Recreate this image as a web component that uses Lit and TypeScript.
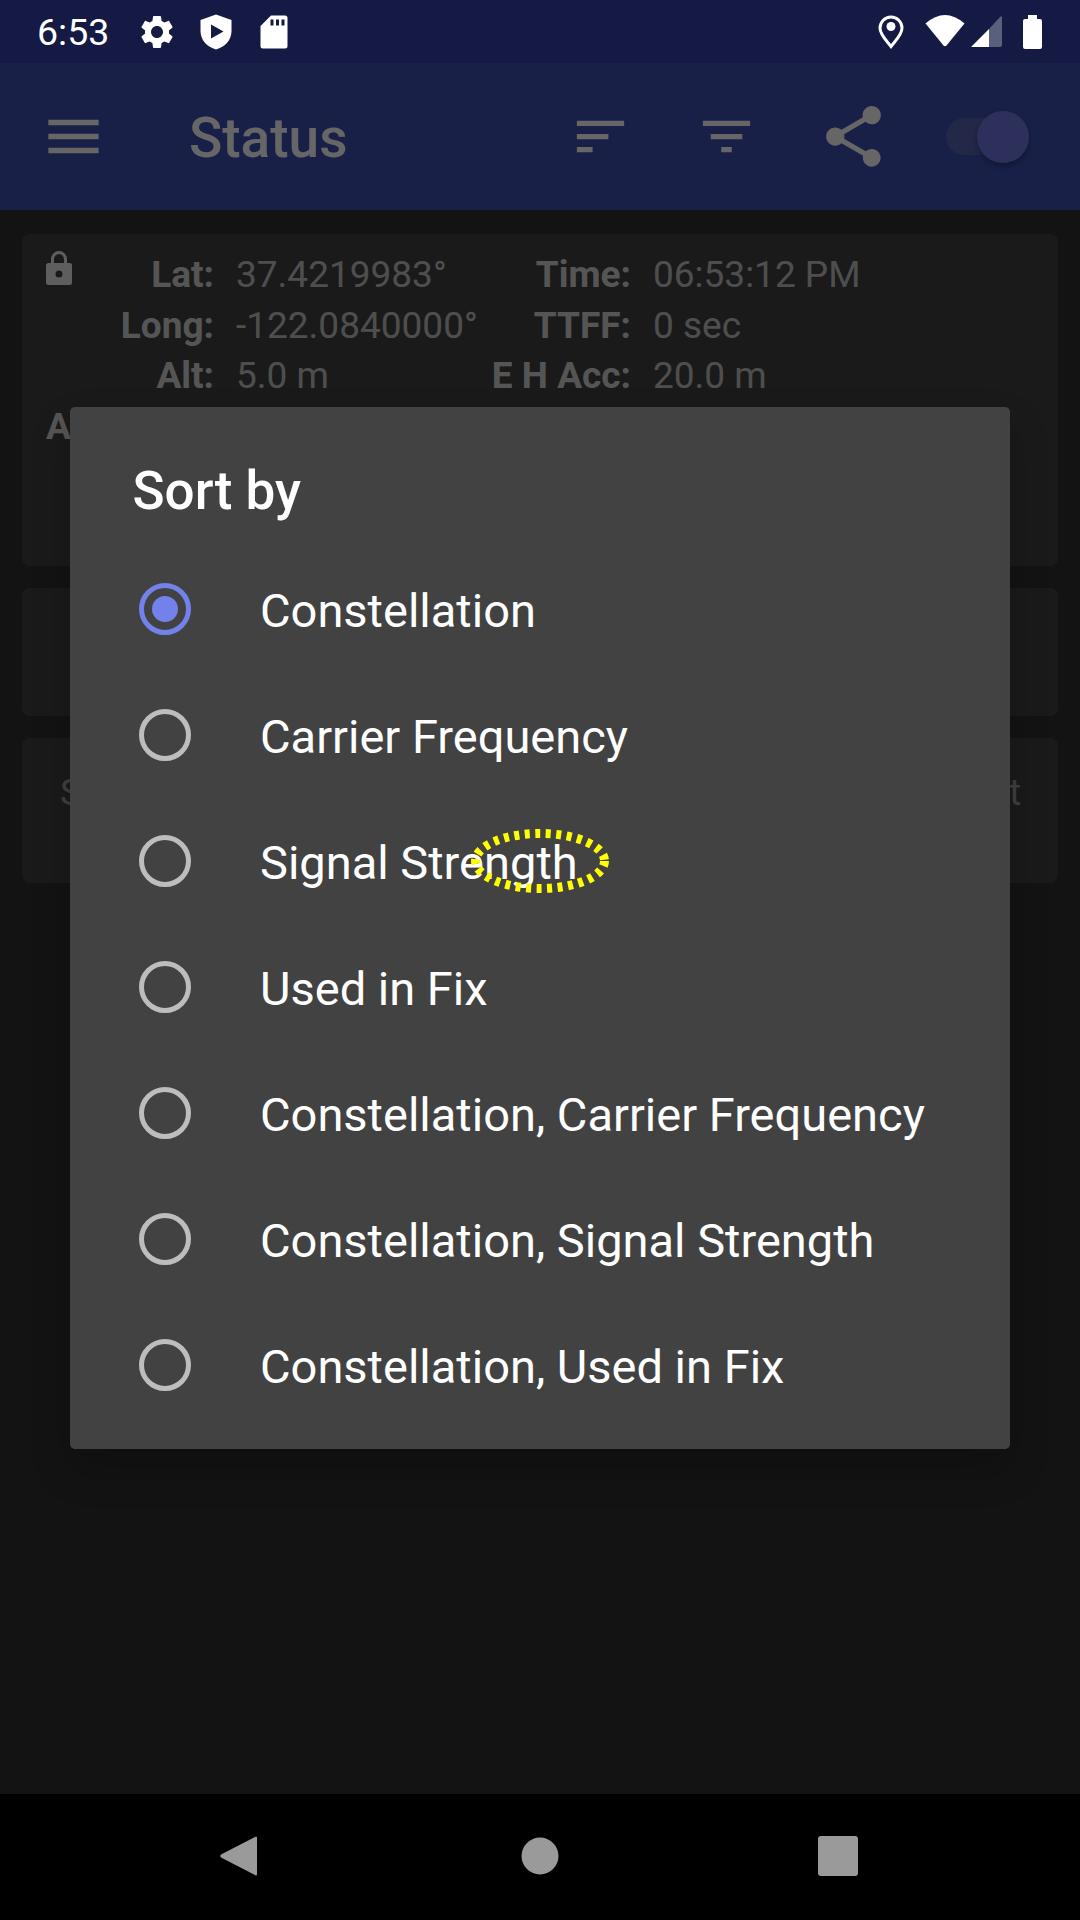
import {html, css, LitElement} from 'lit';
import {customElement} from 'lit/decorators.js';

const rows = [
  ['Lat:', '37.4219983°', 'Time:', '06:53:12 PM'],
  ['Long:', '-122.0840000°', 'TTFF:', '0 sec'],
  ['Alt:', '5.0 m', 'E H Acc:', '20.0 m'],
  ['Alt (MSL):', '', '', ''],
];

const options = [
  'Constellation',
  'Carrier Frequency',
  'Signal Strength',
  'Used in Fix',
  'Constellation, Carrier Frequency',
  'Constellation, Signal Strength',
  'Constellation, Used in Fix',
];

@customElement('app-root')
export class AppRoot extends LitElement {
  static styles = css`
    :host {
      display: block;
      position: relative;
      width: 1080px;
      height: 1920px;
      overflow: hidden;
      font-family: Roboto, 'Noto Sans', sans-serif;
      background: #303030;
    }
    svg {
      display: block;
      flex: none;
    }
    .page {
      display: flex;
      flex-direction: column;
      height: 1920px;
    }

    .status {
      display: flex;
      align-items: center;
      height: 63px;
      flex: none;
      padding: 0 38px;
      box-sizing: border-box;
      background: #141a43;
      color: #fff;
      fill: #fff;
    }
    .clock {
      width: 70px;
      margin-left: -1px;
      margin-right: 30px;
      font-size: 37.5px;
      white-space: nowrap;
    }
    .shield {
      margin-left: 18.5px;
    }
    .sd {
      margin-left: 18px;
    }
    .tray {
      display: flex;
      align-items: center;
      margin-left: auto;
    }
    .wifi {
      margin-left: 14px;
    }
    .signal {
      margin-left: 6px;
    }
    .battery {
      margin-left: 21px;
    }

    .screen {
      position: relative;
      flex: 1;
      display: flex;
      flex-direction: column;
    }
    .appbar {
      display: flex;
      align-items: center;
      height: 147px;
      flex: none;
      padding-left: 40px;
      box-sizing: border-box;
      background: #3f51b5;
      color: #fff;
      fill: #fff;
    }
    .title {
      margin-left: 82px;
      padding-top: 2px;
      font-size: 55px;
      font-weight: 500;
    }
    .sort {
      margin-left: auto;
    }
    .filter {
      margin-left: 63px;
    }
    .share {
      margin-left: 59px;
      margin-right: 56px;
    }
    .switch {
      position: relative;
      width: 83px;
      height: 52px;
      margin-right: 51px;
    }
    .track {
      width: 74px;
      height: 37px;
      margin-top: 7px;
      border-radius: 19px;
      background: #5964b4;
    }
    .thumb {
      position: absolute;
      top: 0;
      right: 0;
      width: 52px;
      height: 52px;
      border-radius: 50%;
      background: #7378e6;
      box-shadow: 0 3px 6px rgba(0, 0, 0, 0.35);
    }

    .cards {
      display: flex;
      flex-direction: column;
      gap: 22.5px;
      padding: 24px 22px 0;
    }
    .card {
      position: relative;
      background: #424242;
      border-radius: 8px;
      box-sizing: border-box;
    }
    .fix {
      height: 331.5px;
      padding: 16px 0 0 24px;
      color: rgba(255, 255, 255, 0.7);
    }
    .lock {
      position: absolute;
      top: 17px;
      left: 24px;
      fill: #fff;
      opacity: 0.9;
    }
    .grid {
      display: grid;
      grid-template-columns: 168px 233px 140px 1fr;
      column-gap: 22px;
      font-size: 37px;
      line-height: 50.5px;
    }
    .label {
      color: rgba(255, 255, 255, 0.8);
      font-weight: 700;
      text-align: right;
      white-space: nowrap;
    }
    .value {
      white-space: nowrap;
    }
    .filters {
      height: 127.5px;
    }
    .notice {
      display: flex;
      justify-content: space-between;
      height: 145px;
      padding: 30px 37px 0 38px;
      color: rgba(255, 255, 255, 0.5);
      font-size: 37px;
      line-height: 50.5px;
    }

    .scrim {
      position: absolute;
      inset: 0;
      background: rgba(0, 0, 0, 0.6);
    }
    .dialog {
      position: absolute;
      top: 344px;
      left: 70px;
      width: 940px;
      height: 1042px;
      box-sizing: border-box;
      padding-top: 57px;
      background: #424242;
      border-radius: 5px;
      color: #fff;
      box-shadow: 0 20px 40px rgba(0, 0, 0, 0.2);
    }
    .dialog h2 {
      margin: 0 0 27px 62.5px;
      font-size: 53px;
      font-weight: 500;
      line-height: 55px;
    }
    .option {
      display: flex;
      align-items: center;
      height: 126px;
      padding-left: 69px;
      font-size: 47px;
      white-space: nowrap;
    }
    .option-text {
      padding-top: 2px;
    }
    .radio {
      display: flex;
      align-items: center;
      justify-content: center;
      width: 52px;
      height: 52px;
      flex: none;
      margin-right: 69px;
      box-sizing: border-box;
      border: 5px solid #bdbdbd;
      border-radius: 50%;
    }
    .radio.on {
      border-color: #7381ea;
    }
    .radio.on::after {
      content: '';
      width: 26px;
      height: 26px;
      border-radius: 50%;
      background: #7381ea;
    }

    .touch {
      position: absolute;
      top: 822px;
      left: 464px;
    }

    .nav {
      display: flex;
      align-items: center;
      height: 126px;
      flex: none;
      padding-left: 218px;
      padding-bottom: 2px;
      box-sizing: border-box;
      background: #000;
      fill: #9a9a9a;
    }
    .nav-home {
      margin-left: 261.5px;
    }
    .nav-recent {
      margin-left: 258.5px;
    }
  `;

  render() {
    return html`
      <div class="page">
        <div class="status">
          <span class="clock">6:53</span>
          <svg width="40" height="40" viewBox="0 0 24 24"><path d="M19.14 12.94c.04-.3.06-.61.06-.94 0-.32-.02-.64-.07-.94l2.03-1.58c.18-.14.23-.41.12-.61l-1.92-3.32c-.12-.22-.37-.29-.59-.22l-2.39.96c-.5-.38-1.03-.7-1.62-.94l-.36-2.54c-.04-.24-.24-.41-.48-.41h-3.84c-.24 0-.43.17-.47.41l-.36 2.54c-.59.24-1.13.57-1.62.94l-2.39-.96c-.22-.08-.47 0-.59.22L2.74 8.87c-.12.21-.08.47.12.61l2.03 1.58c-.05.3-.09.63-.09.94s.02.64.07.94l-2.03 1.58c-.18.14-.23.41-.12.61l1.92 3.32c.12.22.37.29.59.22l2.39-.96c.5.38 1.03.7 1.62.94l.36 2.54c.05.24.24.41.48.41h3.84c.24 0 .44-.17.47-.41l.36-2.54c.59-.24 1.13-.56 1.62-.94l2.39.96c.22.08.47 0 .59-.22l1.92-3.32c.12-.22.07-.47-.12-.61l-2.01-1.58zM12 15.6c-1.98 0-3.6-1.62-3.6-3.6s1.62-3.6 3.6-3.6 3.6 1.62 3.6 3.6-1.62 3.6-3.6 3.6z"/></svg>
          <svg class="shield" width="40" height="40" viewBox="0 0 40 40"><path fill-rule="evenodd" d="M20 2.5 L35.5 8 V19 C35.5 28 29 35 20 37.5 C11 35 4.5 28 4.5 19 V8 Z M15 12.5 V26.5 L27.5 19.5 Z"/></svg>
          <svg class="sd" width="40" height="40" viewBox="0 0 40 40"><path fill-rule="evenodd" d="M17 3.5 H31 A2.5 2.5 0 0 1 33.5 6 V34 A2.5 2.5 0 0 1 31 36.5 H9 A2.5 2.5 0 0 1 6.500 34 V14 Z M16.500 7.500 V13.500 H19.500 V7.500 Z M22 7.500 V13.500 H25 V7.500 Z M27.500 7.500 V13.500 H30.500 V7.500 Z"/></svg>
          <div class="tray">
            <svg width="40" height="40" viewBox="0 0 40 40"><path d="M20 34.500 C15 28 9 22.500 9 16 A11 11 0 0 1 31 16 C31 22.500 25 28 20 34.500 Z" fill="none" stroke="#fff" stroke-width="3"/><circle cx="20" cy="14.500" r="4.500"/></svg>
            <svg class="wifi" width="40" height="40" viewBox="0 0 40 40"><path d="M.5 11.500 Q20 -5.500 39.500 11.500 L21.500 33.500 Q20 35 18.500 33.500 Z"/></svg>
            <svg class="signal" width="31" height="31" viewBox="0 0 31 31"><path d="M0 31 L18 13 V31 Z"/><path d="M18 13 L29.500 .5 Q31 -.5 31 2 V29 Q31 31 29 31 H18 Z" opacity="0.3"/></svg>
            <svg class="battery" width="19" height="34" viewBox="0 0 19 34"><path d="M5 0 H14 V4 H17 A2 2 0 0 1 19 6 V32 A2 2 0 0 1 17 34 H2 A2 2 0 0 1 0 32 V6 A2 2 0 0 1 2 4 H5 Z"/></svg>
          </div>
        </div>

        <div class="screen">
          <div class="appbar">
            <svg width="67" height="67" viewBox="0 0 24 24"><path d="M3 18h18v-2H3v2zm0-5h18v-2H3v2zm0-7v2h18V6H3z"/></svg>
            <span class="title">Status</span>
            <svg class="sort" width="63" height="63" viewBox="0 0 24 24"><path d="M3 18h6v-2H3v2zM3 6v2h18V6H3zm0 7h12v-2H3v2z"/></svg>
            <svg class="filter" width="63" height="63" viewBox="0 0 24 24"><path d="M10 18h4v-2h-4v2zM3 6v2h18V6H3zm3 7h12v-2H6v2z"/></svg>
            <svg class="share" width="73" height="73" viewBox="0 0 24 24"><path d="M18 16.080c-.76 0-1.440.3-1.960.77L8.910 12.700c.05-.23.09-.46.09-.7s-.04-.47-.09-.7l7.050-4.110c.54.5 1.250.81 2.040.81 1.660 0 3-1.340 3-3s-1.340-3-3-3-3 1.340-3 3c0 .24.04.47.09.7L8.040 9.810C7.500 9.310 6.790 9 6 9c-1.660 0-3 1.340-3 3s1.340 3 3 3c.79 0 1.500-.31 2.040-.81l7.120 4.160c-.05.21-.08.43-.08.65 0 1.610 1.310 2.920 2.920 2.920 1.610 0 2.920-1.310 2.920-2.920s-1.310-2.920-2.920-2.920z"/></svg>
            <div class="switch">
              <div class="track"></div>
              <div class="thumb"></div>
            </div>
          </div>

          <div class="cards">
            <div class="card fix">
              <svg class="lock" width="26" height="34" viewBox="0 0 26 34"><path fill-rule="evenodd" d="M5 12 V8.500 A8 8.500 0 0 1 21 8.500 V12 H23.500 A2.500 2.500 0 0 1 26 14.500 V31.500 A2.500 2.500 0 0 1 23.500 34 H2.500 A2.500 2.500 0 0 1 0 31.500 V14.500 A2.500 2.500 0 0 1 2.500 12 Z M8 12 H18 V8.500 A5 5.500 0 0 0 8 8.500 Z M13 19.500 A3.500 3.500 0 1 0 13 26.500 A3.500 3.500 0 1 0 13 19.500 Z"/></svg>
              <div class="grid">
                ${rows.map(
                  (r) => html`
                    <span class="label">${r[0]}</span>
                    <span class="value">${r[1]}</span>
                    <span class="label">${r[2]}</span>
                    <span class="value">${r[3]}</span>
                  `
                )}
              </div>
            </div>
            <div class="card filters"></div>
            <div class="card notice"><span>S</span><span>t</span></div>
          </div>

          <div class="scrim"></div>

          <div class="dialog">
            <h2>Sort by</h2>
            ${options.map(
              (o, i) => html`
                <div class="option">
                  <span class="radio ${i === 0 ? 'on' : ''}"></span>
                  <span class="option-text">${o}</span>
                </div>
              `
            )}
          </div>
        </div>

        <div class="nav">
          <svg width="40" height="44" viewBox="0 0 40 44"><path d="M37 3 Q39 1.500 39 4 V40 Q39 42.500 37 41 L3 23.500 Q1.500 22 3 20.500 Z"/></svg>
          <svg class="nav-home" width="40" height="40" viewBox="0 0 40 40"><circle cx="20" cy="20" r="18.500"/></svg>
          <svg class="nav-recent" width="40" height="40" viewBox="0 0 40 40"><rect width="40" height="40" rx="3"/></svg>
        </div>
      </div>

      <svg class="touch" width="152" height="78" viewBox="0 0 152 78">
        <ellipse cx="76" cy="39" rx="64.500" ry="27.500" fill="none" stroke="#ffff00" stroke-width="9" stroke-dasharray="5 5.500"/>
      </svg>
    `;
  }
}
